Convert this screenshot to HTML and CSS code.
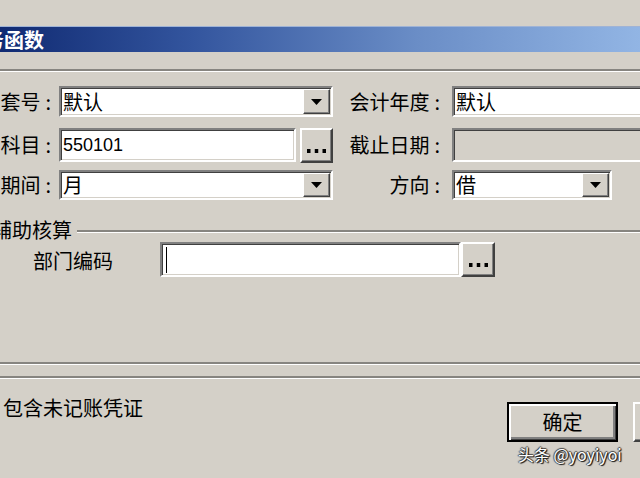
FILE: index.html
```html
<!DOCTYPE html>
<html lang="zh-CN">
<head>
<meta charset="utf-8">
<title>账务函数</title>
<link rel="stylesheet" href="styles.css">
</head>
<body>
<div class="dlg">
  <div class="top-space"></div>
  <div class="titlebar"><span class="title-text">账务函数</span></div>
  <div class="sep sep-top"></div>

  <div class="row r1">
    <div class="lbl lbl-l">账套号<span class="colon">:</span></div>
    <div class="field combo w274"><span class="val">默认</span><span class="drop"><svg width="11" height="6" viewBox="0 0 11 6"><path d="M0 0H11L5.5 6Z" fill="#000"/></svg></span></div>
    <div class="lbl lbl-r">会计年度<span class="colon">:</span></div>
    <div class="field w200"><span class="val">默认</span></div>
  </div>

  <div class="row r2">
    <div class="lbl lbl-l">科目<span class="colon">:</span></div>
    <div class="field w237"><span class="val num">550101</span></div>
    <div class="btn dots b33"><svg width="19" height="4" viewBox="0 0 19 4"><rect x="0" width="3.5" height="4"/><rect x="7.75" width="3.5" height="4"/><rect x="15.5" width="3.5" height="4"/></svg></div>
    <div class="lbl lbl-r">截止日期<span class="colon">:</span></div>
    <div class="field disabled w200"></div>
  </div>

  <div class="row r3">
    <div class="lbl lbl-l">期间<span class="colon">:</span></div>
    <div class="field combo w274"><span class="val">月</span><span class="drop"><svg width="11" height="6" viewBox="0 0 11 6"><path d="M0 0H11L5.5 6Z" fill="#000"/></svg></span></div>
    <div class="lbl lbl-r">方向<span class="colon">:</span></div>
    <div class="field combo w160"><span class="val">借</span><span class="drop"><svg width="11" height="6" viewBox="0 0 11 6"><path d="M0 0H11L5.5 6Z" fill="#000"/></svg></span></div>
  </div>

  <div class="group-head">
    <span class="group-title">辅助核算</span>
    <span class="group-line"></span>
  </div>

  <div class="row r4">
    <div class="lbl-dept">部门编码</div>
    <div class="field w300"><span class="caret"></span></div>
    <div class="btn dots b34"><svg width="19" height="4" viewBox="0 0 19 4"><rect x="0" width="3.5" height="4"/><rect x="7.75" width="3.5" height="4"/><rect x="15.5" width="3.5" height="4"/></svg></div>
  </div>

  <div class="sep sep-group"></div>
  <div class="sep sep-bottom"></div>

  <div class="footer">
    <div class="check-label">包含未记账凭证</div>
    <div class="btn push default">确定</div>
    <div class="btn push">取消</div>
  </div>

  <div class="watermark">头条 @yoyiyoi</div>
</div>
</body>
</html>
```

FILE: styles.css
```css
html, body {
  margin: 0;
  padding: 0;
  background: #d4d0c8;
}

.dlg {
  position: relative;
  width: 640px;
  height: 478px;
  overflow: hidden;
  background: #d4d0c8;
  font-family: "Noto Sans CJK SC", "Noto Sans", sans-serif;
  font-size: 20px;
  color: #000;
  display: flex;
  flex-direction: column;
}

.top-space {
  height: 26px;
  flex-shrink: 0;
}

.titlebar {
  height: 26px;
  flex-shrink: 0;
  display: flex;
  align-items: center;
  background: linear-gradient(to right, #102a72 0%, #33559e 30%, #6a8dc6 65%, #92b5e4 100%);
  border-top: 1px solid #9fb3d6;
  box-sizing: border-box;
  color: #fff;
  font-weight: bold;
  font-size: 20px;
  line-height: 26px;
  overflow: hidden;
}

.title-text {
  margin-left: -36px;
  white-space: nowrap;
}

.sep {
  flex-shrink: 0;
  height: 0;
  border-top: 2px solid #878580;
  border-bottom: 1px solid #ffffff;
  width: 700px;
}

.sep-top { margin-top: 17px; }

.row {
  display: flex;
  align-items: center;
  flex-shrink: 0;
  width: 700px;
}

.r1 { height: 31px; margin-top: 14px; }
.r2 { height: 34px; margin-top: 11px; }
.r3 { height: 30px; margin-top: 8px; }
.r4 { height: 35px; margin-top: 2px; }

.lbl {
  display: flex;
  justify-content: flex-end;
  white-space: nowrap;
  flex-shrink: 0;
  line-height: 24px;
}

.colon {
  margin-left: 5px;
}

.lbl-l {
  width: 51px;
  margin-right: 8px;
}

.lbl-r {
  width: 107px;
  margin-right: 12px;
}

.field {
  box-sizing: border-box;
  height: 100%;
  flex-shrink: 0;
  background: #fff;
  border: 2px solid;
  border-color: #808080 #ffffff #ffffff #808080;
  box-shadow: inset 1px 1px #404040, inset -1px -1px #d4d0c8;
  display: flex;
  align-items: center;
  padding-left: 2px;
  overflow: hidden;
}

.field.disabled { background: #d4d0c8; }

.w274 { width: 274px; }
.w200 { width: 200px; }
.w237 { width: 237px; }
.w160 { width: 160px; }
.w300 { width: 301px; margin-left: 45px; }

.val {
  flex: 1;
  white-space: nowrap;
  line-height: 24px;
}

.num {
  font-family: "Liberation Sans", Arial, sans-serif;
  font-size: 18px;
}

.combo {
  padding-right: 1px;
}

.drop {
  box-sizing: border-box;
  width: 27px;
  height: calc(100% - 2px);
  flex-shrink: 0;
  background: #d4d0c8;
  border: 1px solid;
  border-color: #ffffff #404040 #404040 #ffffff;
  box-shadow: inset -1px -1px #808080;
  display: flex;
  align-items: center;
  justify-content: center;
}

.btn {
  box-sizing: border-box;
  flex-shrink: 0;
  background: #d4d0c8;
  border: 2px solid;
  border-color: #ffffff #404040 #404040 #ffffff;
  box-shadow: inset -1px -1px #808080;
  display: flex;
  justify-content: center;
}

.dots {
  align-items: flex-end;
  padding-bottom: 8px;
}

.b33 {
  width: 33px;
  height: 35px;
  margin-left: 4px;
}

.b34 {
  width: 34px;
  height: 35px;
  margin-left: 0;
}

.group-head {
  display: flex;
  align-items: center;
  height: 20px;
  margin-top: 20px;
  flex-shrink: 0;
  width: 700px;
}

.group-title {
  margin-left: -8px;
  white-space: nowrap;
  line-height: 20px;
}

.group-line {
  flex: 1;
  height: 0;
  margin-left: 5px;
  border-top: 2px solid #878580;
  border-bottom: 1px solid #ffffff;
  margin-top: 2px;
}

.lbl-dept {
  width: 115px;
  padding-left: 33px;
  box-sizing: border-box;
  white-space: nowrap;
  flex-shrink: 0;
  line-height: 24px;
  margin-top: 3px;
}

.caret {
  display: block;
  width: 0;
  height: 26px;
  border-left: 1px solid #000;
  margin-left: 2px;
}

.sep-group { margin-top: 85px; }
.sep-bottom { margin-top: 11px; }

.footer {
  display: flex;
  align-items: flex-start;
  margin-top: 19px;
  width: 760px;
  flex-shrink: 0;
}

.check-label {
  width: 507px;
  box-sizing: border-box;
  padding-left: 3px;
  white-space: nowrap;
  line-height: 20px;
  flex-shrink: 0;
}

.push {
  width: 111px;
  height: 40px;
  margin-top: 4px;
  align-items: center;
  line-height: 24px;
  margin-right: 15px;
}

.push.default {
  border: 2px solid #000;
  box-shadow: inset 1px 1px #ffffff, inset 2px 2px #ffffff, inset -1px -1px #404040, inset -3px -3px #808080;
}

.watermark {
  position: absolute;
  left: 518px;
  top: 444px;
  font-size: 16px;
  color: #fff;
  white-space: nowrap;
  text-shadow: 1px 1px 1px #111, -1px 0 1px #444, 0 -1px 1px #444, 1px 0 1px #444;
  line-height: 20px;
}
```
